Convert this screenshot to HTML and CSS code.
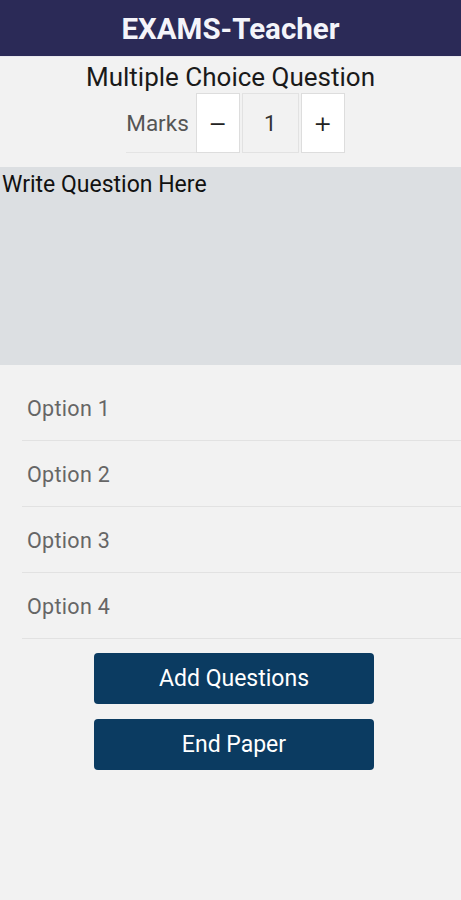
FILE: index.html
```html
<!DOCTYPE html>
<html lang="en">
<head>
  <meta charset="UTF-8">
  <title>EXAMS-Teacher</title>
  <link rel="stylesheet" href="styles.css">
</head>
<body>

  <header class="topBar">EXAMS-Teacher</header>

  <h2 class="qType">Multiple Choice Question</h2>

  <div class="marksRow">
    <span class="marksLabel">Marks</span>
    <button class="stepBtn">&minus;</button>
    <span class="marksValue">1</span>
    <button class="stepBtn">+</button>
  </div>

  <textarea class="questionBox" placeholder="Write Question Here"></textarea>

  <div class="optionList">
    <input type="text" class="optionInput" placeholder="Option 1">
    <input type="text" class="optionInput" placeholder="Option 2">
    <input type="text" class="optionInput" placeholder="Option 3">
    <input type="text" class="optionInput" placeholder="Option 4">
  </div>

  <div class="actions">
    <button class="mainBtn">Add Questions</button>
    <button class="mainBtn">End Paper</button>
  </div>

</body>
</html>
```

FILE: styles.css
```css
html, body {
  margin: 0;
  height: 100%;
  font-family: Roboto, 'Noto Sans', sans-serif;
  background-color: #f2f2f2;
}

.topBar {
  height: 56px;
  line-height: 58px;
  background-color: #2b2a57;
  color: #f4f4fa;
  text-align: center;
  font-size: 29.5px;
  font-weight: bold;
  border-bottom: 1px solid #e8e8ee;
}

.qType {
  margin: 4px 0 0;
  text-align: center;
  font-size: 26px;
  font-weight: normal;
  line-height: 32px;
  color: #1a1a1a;
}

.marksRow {
  display: flex;
  justify-content: center;
  align-items: stretch;
  height: 60px;
  padding-left: 10px;
}

.marksLabel {
  display: flex;
  align-items: center;
  padding: 0 7px 0 0;
  font-size: 22.5px;
  color: #555555;
  border-bottom: 1px solid #e4e4e4;
}

.stepBtn {
  width: 44px;
  border: 1px solid #dddddd;
  background-color: #ffffff;
  font-family: 'DejaVu Sans', sans-serif;
  font-size: 22px;
  font-weight: normal;
  color: #222222;
  padding: 0;
}

.marksValue {
  width: 57px;
  display: flex;
  align-items: center;
  justify-content: center;
  margin: 0 2px;
  border: 1px solid #e2e2e2;
  box-sizing: border-box;
  font-size: 22px;
  color: #333333;
}

.questionBox {
  display: block;
  width: 100%;
  height: 198px;
  margin-top: 14px;
  box-sizing: border-box;
  border: none;
  background-color: #dcdfe2;
  padding: 4px 2px;
  font-family: Roboto, sans-serif;
  font-size: 23px;
  resize: none;
}

.questionBox::placeholder {
  color: #111111;
}

.optionList {
  margin: 10px 0 0 22px;
  display: flex;
  flex-direction: column;
}

.optionInput {
  height: 66px;
  box-sizing: border-box;
  border: none;
  border-bottom: 1px solid #e2e2e2;
  background: transparent;
  padding: 2px 5px 0;
  font-family: Roboto, sans-serif;
  font-size: 21.5px;
  letter-spacing: 0.3px;
}

.optionInput::placeholder {
  color: #666666;
}

.actions {
  display: flex;
  flex-direction: column;
  align-items: center;
  gap: 15px;
  margin-top: 14px;
  padding-left: 7px;
}

.mainBtn {
  width: 280px;
  height: 51px;
  border: none;
  border-radius: 4px;
  background-color: #0b3b61;
  color: #ffffff;
  font-family: Roboto, sans-serif;
  font-size: 23px;
}
```
